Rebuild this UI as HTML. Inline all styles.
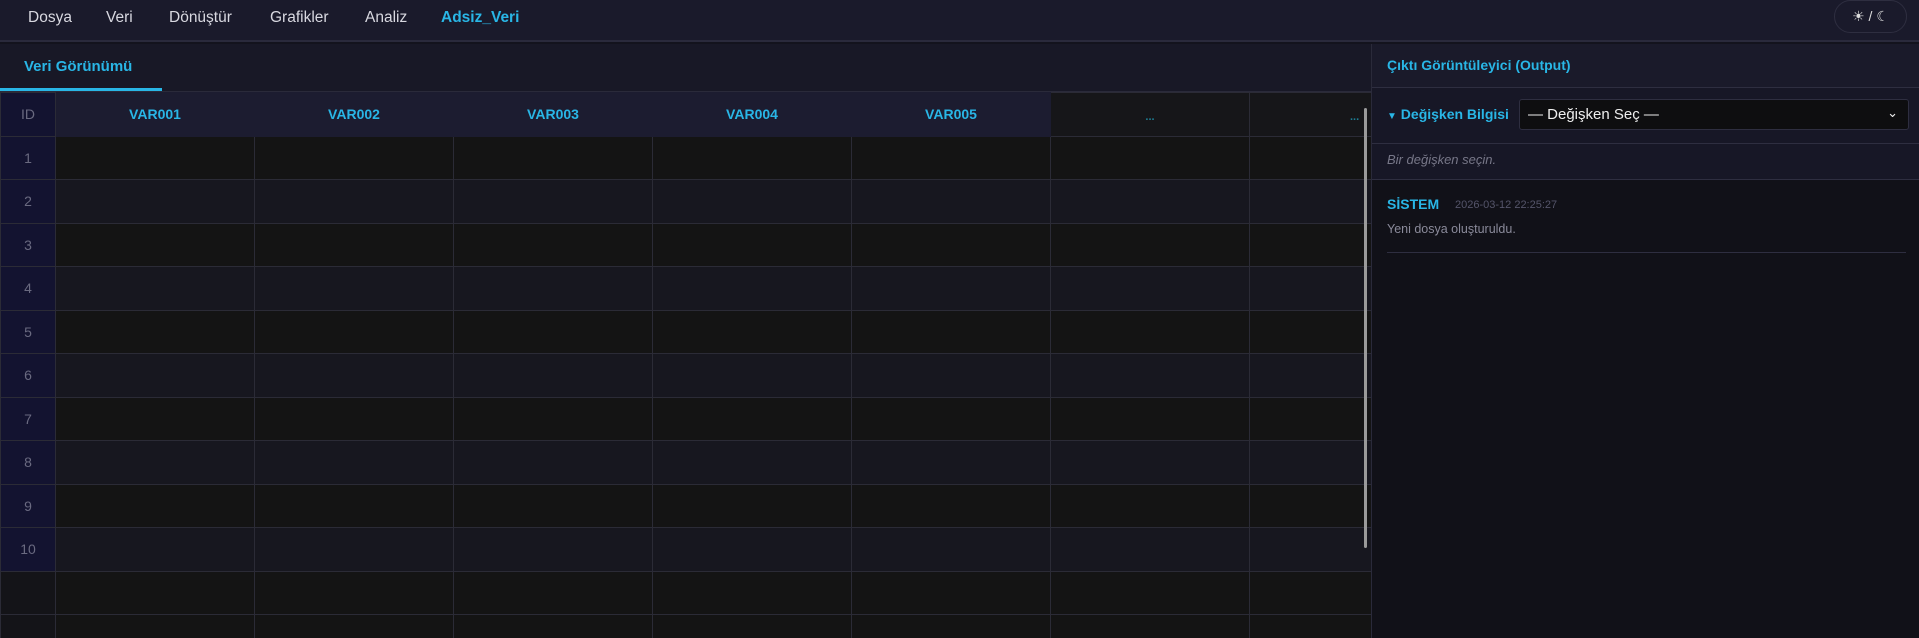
<!DOCTYPE html>
<html style="overflow:hidden"><head><meta charset="utf-8"><style>
*{box-sizing:border-box;margin:0;padding:0}
html,body{width:1919px;height:638px;overflow:hidden}
body{background:#13131d;font-family:"Liberation Sans","DejaVu Sans",sans-serif;position:relative}
.nav{position:absolute;left:0;top:0;width:1919px;height:42px;background:#1a1a2b;border-bottom:2px solid #2a2a3c}
.nav span{position:absolute;top:9px;font-size:15.5px;color:#d8d8e0}
.nav .act{color:#29b6e6;font-weight:bold}
.theme{position:absolute;left:1834px;top:0;width:73px;height:33px;border:1px solid #2e2e40;border-radius:17px;color:#ddd;font-size:14px;text-align:center;line-height:31px}
.left{position:absolute;left:0;top:44px;width:1371px;height:594px;background:#181826}
.tab{position:absolute;left:24px;top:14px;color:#29b6e6;font-size:15px;font-weight:bold}
.tabline{position:absolute;left:0;top:44px;width:162px;height:3px;background:#29b6e6}
.tabb{position:absolute;left:0;top:47px;width:1371px;height:1px;background:#2a2a3a}
.tw{position:absolute;left:0;top:92px;width:1371px;height:546px;overflow:hidden}
table{border-collapse:collapse;table-layout:fixed;width:1450px}
td,th{border:1px solid #2b2b36;height:43.5px;font-size:14px}
th{background:#1c1c30;color:#29b6e6;font-weight:bold;border-color:#1c1c30}
th.id{background:#131330;color:#6a6a80;font-weight:normal;border-color:#2b2b36}
th.e{background:#161619;color:#1e7f95;border-color:#2b2b36;font-size:11px;padding-top:6px}
td.id{background:#131330;color:#6a6a80;text-align:center;font-size:14px}
tr.o td{background:#141414}tr.v td{background:#17171f}
tr.o td.id,tr.v td.id{background:#131330}
.sb{position:absolute;left:1364px;top:108px;width:3px;height:440px;background:#9a9a9a;border-radius:2px}
.right{position:absolute;left:1371px;top:44px;width:548px;height:594px;background:#111118;border-left:1px solid #2a2a3a}
.r1{position:absolute;left:0;top:0;width:548px;height:44px;background:#1a1a2a;border-bottom:1px solid #2e2e40}
.r2{position:absolute;left:0;top:44px;width:548px;height:91px;background:#171726}
.b1{position:absolute;left:0;top:55px;width:548px;height:1px;background:#2e2e40}
.b2{position:absolute;left:0;top:135px;width:548px;height:1px;background:#2e2e40}
.sel{position:absolute;left:147px;top:11px;width:390px;height:31px;background:#0e0e10;border:1px solid #2e2e40;border-radius:3px;color:#eee;font-size:15px;padding:6px 8px}
</style></head><body>
<div class="nav">
<span style="left:28px">Dosya</span><span style="left:106px">Veri</span><span style="left:169px">Dönüştür</span><span style="left:270px">Grafikler</span><span style="left:365px">Analiz</span><span class="act" style="left:441px">Adsiz_Veri</span>
<div class="theme">☀ / ☾</div>
</div>
<div class="left"><div class="tab">Veri Görünümü</div><div class="tabline"></div><div class="tabb"></div></div>
<div class="tw"><table>
<colgroup><col style="width:55px"><col style="width:199px"><col style="width:199px"><col style="width:199px"><col style="width:199px"><col style="width:199px"><col style="width:199px"><col style="width:201px"></colgroup>
<tr><th class="id">ID</th><th>VAR001</th><th>VAR002</th><th>VAR003</th><th>VAR004</th><th>VAR005</th><th class="e">...</th><th class="e" style="text-align:left;padding-left:100px">...</th></tr>
<tr class="o"><td class="id">1</td><td></td><td></td><td></td><td></td><td></td><td></td><td></td></tr>
<tr class="v"><td class="id">2</td><td></td><td></td><td></td><td></td><td></td><td></td><td></td></tr>
<tr class="o"><td class="id">3</td><td></td><td></td><td></td><td></td><td></td><td></td><td></td></tr>
<tr class="v"><td class="id">4</td><td></td><td></td><td></td><td></td><td></td><td></td><td></td></tr>
<tr class="o"><td class="id">5</td><td></td><td></td><td></td><td></td><td></td><td></td><td></td></tr>
<tr class="v"><td class="id">6</td><td></td><td></td><td></td><td></td><td></td><td></td><td></td></tr>
<tr class="o"><td class="id">7</td><td></td><td></td><td></td><td></td><td></td><td></td><td></td></tr>
<tr class="v"><td class="id">8</td><td></td><td></td><td></td><td></td><td></td><td></td><td></td></tr>
<tr class="o"><td class="id">9</td><td></td><td></td><td></td><td></td><td></td><td></td><td></td></tr>
<tr class="v"><td class="id">10</td><td></td><td></td><td></td><td></td><td></td><td></td><td></td></tr>
<tr class="o"><td class="id" style="background:#141418"></td><td></td><td></td><td></td><td></td><td></td><td></td><td></td></tr>
<tr class="o"><td class="id" style="background:#141418"></td><td></td><td></td><td></td><td></td><td></td><td></td><td></td></tr>
</table></div>
<div class="sb"></div>
<div class="right">
<div class="r1"><div style="position:absolute;left:15px;top:13px;color:#29b6e6;font-size:14px;font-weight:bold">Çıktı Görüntüleyici (Output)</div></div>
<div class="r2">
<div style="position:absolute;left:15px;top:18px;color:#29b6e6;font-size:14px;font-weight:bold"><span style="font-size:10px">▼</span> Değişken Bilgisi</div>
<div class="sel">— Değişken Seç —<span style="position:absolute;right:10px;top:5px;font-size:13px">⌄</span></div>
<div class="b1"></div>
<div style="position:absolute;left:15px;top:64px;color:#777788;font-size:13px;font-style:italic">Bir değişken seçin.</div>
</div>
<div class="b2"></div>
<div style="position:absolute;left:15px;top:152px;color:#29b6e6;font-size:14px;font-weight:bold">SİSTEM</div>
<div style="position:absolute;left:83px;top:155px;color:#55556a;font-size:11px">2026-03-12 22:25:27</div>
<div style="position:absolute;left:15px;top:178px;color:#8a8a9a;font-size:12.5px">Yeni dosya oluşturuldu.</div>
<div style="position:absolute;left:15px;top:208px;width:519px;height:1px;background:#2e2e40"></div>
</div>
</body></html>
